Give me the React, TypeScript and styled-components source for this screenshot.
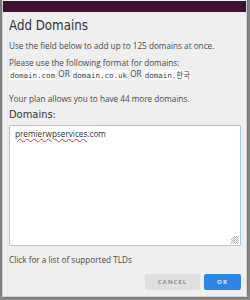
import React from "react";
import styled, { createGlobalStyle } from "styled-components";

const Global = createGlobalStyle`
  html, body { margin: 0; padding: 0; }
  body {
    width: 250px;
    height: 300px;
    background: #8a8a8a;
    overflow: hidden;
    font-family: "Open Sans", "Noto Sans", sans-serif;
  }
`;

const Page = styled.div`
  width: 250px;
  height: 300px;
  box-sizing: border-box;
  padding: 0 3px 3px 2px;
  display: flex;
`;

const Dialog = styled.div`
  flex: 1;
  display: flex;
  flex-direction: column;
  background: #efefef;
  border: 1px solid #d4d4d4;
  border-top: none;
  box-sizing: border-box;
  box-shadow: 0 0 3px rgba(0, 0, 0, 0.35);
`;

const HeaderBar = styled.div`
  height: 12px;
  margin-top: 1px;
  background: #3d1034;
`;

const Body = styled.div`
  flex: 1;
  display: flex;
  flex-direction: column;
  padding: 0 5px 6px 6px;
`;

const Title = styled.h1`
  margin: 5px 0 0;
  font-family: "Liberation Sans Narrow", "DejaVu Sans Condensed", sans-serif;
  font-stretch: condensed;
  font-weight: 400;
  font-size: 13.2px;
  line-height: 18px;
  color: #333;
`;

const Para = styled.p<{ $mt: number; $lh?: number }>`
  margin: ${(p) => p.$mt}px 0 0;
  font-size: 8.2px;
  line-height: ${(p) => p.$lh ?? 12}px;
  color: #4a4a4a;
`;

const Code = styled.code`
  font-family: "DejaVu Sans Mono", monospace;
  font-size: 7.5px;
  background: #ffffff;
  padding: 0.5px 1px;
  color: #444;
`;

const Korean = styled.span`
  font-family: "Noto Sans CJK KR", sans-serif;
`;

const Label = styled.div`
  margin-top: 3.5px;
  font-family: "Liberation Sans Narrow", "DejaVu Sans Condensed", sans-serif;
  font-stretch: condensed;
  font-size: 11px;
  line-height: 13px;
  color: #333;
`;

const Field = styled.div`
  position: relative;
  margin-top: 4px;
  width: 232px;
  height: 121px;
  box-sizing: border-box;
  background: #fff;
  border: 1px solid #9fc7ee;
  border-radius: 1px;
  padding: 1.5px 5px;
  font-size: 8.2px;
  line-height: 12px;
  color: #333;
`;

const Misspelled = styled.span`
  text-decoration: underline wavy #e0302a;
  text-decoration-thickness: 1px;
  text-underline-offset: 1px;
`;

const Grip = styled.svg`
  position: absolute;
  right: 1px;
  bottom: 1px;
`;

const Hint = styled.div`
  margin-top: 7.5px;
  font-size: 8.2px;
  line-height: 12px;
  color: #4a4a4a;
`;

const Actions = styled.div`
  margin-top: 8.5px;
  width: 232px;
  display: flex;
  justify-content: flex-end;
  gap: 4px;
`;

const Button = styled.button<{ $primary?: boolean; $w: number }>`
  width: ${(p) => p.$w}px;
  height: 16px;
  padding: 0;
  border: none;
  border-radius: 2px;
  background: ${(p) => (p.$primary ? "#2b86e6" : "#e0e0e0")};
  color: ${(p) => (p.$primary ? "#e8f1fb" : "#8c8c8c")};
  font-family: "Open Sans", sans-serif;
  font-weight: 700;
  font-size: 6px;
  letter-spacing: 1px;
  display: flex;
  align-items: center;
  justify-content: center;
`;

export default function App() {
  return (
    <>
      <Global />
      <Page>
        <Dialog>
          <HeaderBar />
          <Body>
            <Title>Add Domains</Title>
            <Para $mt={5.5}>Use the field below to add up to 125 domains at once.</Para>
            <Para $mt={5} $lh={11}>
              Please use the following format for domains:
              <br />
              <Code>domain.com</Code> OR <Code>domain.co.uk</Code> OR{" "}
              <Code>
                domain.<Korean>한국</Korean>
              </Code>
            </Para>
            <Para $mt={12.5}>Your plan allows you to have 44 more domains.</Para>
            <Label>Domains:</Label>
            <Field>
              <Misspelled>premierwpservices</Misspelled>.com
              <Grip width="8" height="8" viewBox="0 0 8 8">
                <g stroke="#9a9a9a" strokeWidth="0.8">
                  <line x1="8" y1="0" x2="0" y2="8" />
                  <line x1="8" y1="2" x2="2" y2="8" />
                  <line x1="8" y1="4" x2="4" y2="8" />
                  <line x1="8" y1="6" x2="6" y2="8" />
                  <line x1="6" y1="0" x2="0" y2="6" />
                  <line x1="4" y1="0" x2="0" y2="4" />
                </g>
              </Grip>
            </Field>
            <Hint>Click for a list of supported TLDs</Hint>
            <Actions>
              <Button $w={55}>CANCEL</Button>
              <Button $w={37} $primary>
                OK
              </Button>
            </Actions>
          </Body>
        </Dialog>
      </Page>
    </>
  );
}
